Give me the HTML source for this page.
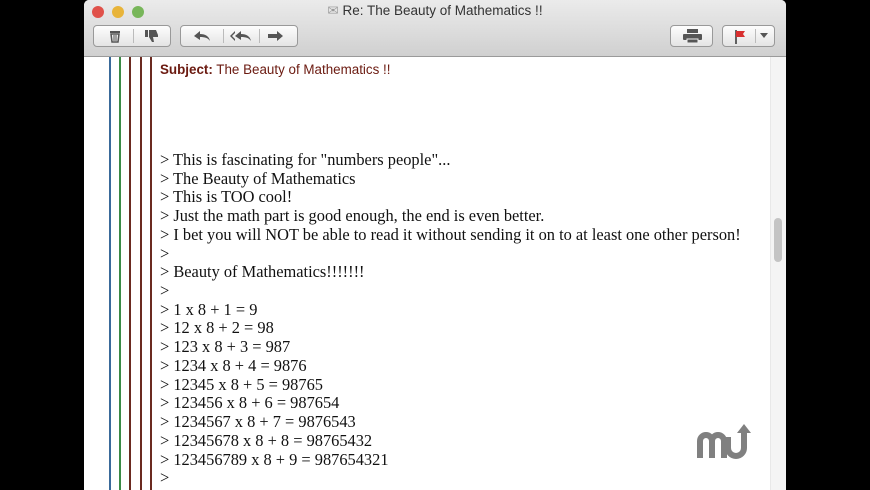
<!DOCTYPE html>
<html><head><style>
body{margin:0;width:870px;height:490px;background:#000;position:relative;overflow:hidden;font-family:"Liberation Sans",sans-serif}
.win{position:absolute;left:84px;top:0;width:702px;height:490px;background:#fff;border-radius:5px 5px 0 0;overflow:hidden}
.tb{position:absolute;left:0;top:0;width:702px;height:56px;background:linear-gradient(#ebebeb,#d0d0d0);border-bottom:1px solid #9a9a9a}
.dot{position:absolute;top:6px;width:12px;height:12px;border-radius:50%}
.title{position:absolute;top:3px;left:0;width:702px;text-align:center;font-size:13.5px;color:#333}
.btn{position:absolute;top:25px;height:22px;border:1px solid #999;border-radius:4px;background:linear-gradient(#fdfdfd,#e4e4e4);box-sizing:border-box}
.sep{position:absolute;top:3px;width:1px;height:14px;background:#bbb}
.ic{position:absolute;top:2px;font-size:14px;color:#555}
.vl{position:absolute;top:57px;bottom:0;width:2px}
.txt{position:absolute;left:76px;top:151px;font-family:"Liberation Serif",serif;font-size:16.4px;line-height:18.72px;color:#111;white-space:pre}
.sb{position:absolute;right:0;top:57px;width:15px;bottom:0;background:#f4f4f4;border-left:1px solid #e8e8e8}
</style></head><body>
<div class="win">
<div class="tb">
<div class="dot" style="left:8px;background:#e0514a"></div>
<div class="dot" style="left:28px;background:#e8b43a"></div>
<div class="dot" style="left:48px;background:#78b65a"></div>
<div class="title"><span style="color:#999">✉</span> Re: The Beauty of Mathematics !!</div>
<div class="btn" style="left:9px;width:78px"><svg class="ic" style="left:15px;top:3px" width="12" height="14"><rect x="1" y="2" width="10" height="2" fill="#555"/><path d="M2 5h8l-1 8H3z" fill="none" stroke="#555" stroke-width="1.5"/><path d="M5 6v6M7 6v6" stroke="#555"/></svg><div class="sep" style="left:39px"></div><svg class="ic" style="left:50px;top:3px" width="16" height="14"><path d="M1 1h3v7H1zM5 1h7l2 5v2H9l1 5H8L5 8z" fill="#555"/></svg></div>
<div class="btn" style="left:96px;width:118px"><svg class="ic" style="left:12px;top:4px" width="18" height="12"><path d="M1 6L7 1v3c5 0 9 2 10 7-2-3-5-4-10-4v3z" fill="#555"/></svg><div class="sep" style="left:42px"></div><svg class="ic" style="left:48px;top:4px" width="24" height="12"><path d="M1 6L6 1v2L3 6l3 3v2zM6 6l6-5v3c5 0 9 2 10 7-2-3-5-4-10-4v3z" fill="#555"/></svg><div class="sep" style="left:78px"></div><svg class="ic" style="left:86px;top:4px" width="18" height="12"><path d="M1 4h9V1l6 5-6 5V8H1z" fill="#555"/></svg></div>
<div class="btn" style="left:586px;width:43px"><svg class="ic" style="left:12px;top:3px" width="19" height="14"><rect x="4" y="0" width="11" height="4" fill="#555"/><rect x="0" y="5" width="19" height="6" rx="1" fill="#555"/><rect x="4" y="10" width="11" height="4" fill="#555" stroke="#eee"/></svg></div>
<div class="btn" style="left:638px;width:53px"><svg class="ic" style="left:10px;top:3px" width="14" height="16"><path d="M3 1v14" stroke="#333" stroke-width="1.5"/><path d="M3 2h9l-2 3 2 3H3z" fill="#d83030"/></svg><div class="sep" style="left:32px"></div><svg class="ic" style="left:37px;top:7px" width="8" height="6"><path d="M0 0h8L4 5z" fill="#555"/></svg></div>
</div>
<div class="vl" style="left:25px;background:#3a6a9a"></div>
<div class="vl" style="left:35px;background:#3b8a45"></div>
<div class="vl" style="left:45px;background:#6b2a20"></div>
<div class="vl" style="left:56px;background:#6b2a20"></div>
<div class="vl" style="left:66px;background:#6b2a20"></div>
<div style="position:absolute;left:76px;top:62px;font-size:13.4px;color:#6b1a10"><b>Subject:</b> The Beauty of Mathematics !!</div>
<div class="txt">&gt; This is fascinating for "numbers people"...
&gt; The Beauty of Mathematics
&gt; This is TOO cool!
&gt; Just the math part is good enough, the end is even better.
&gt; I bet you will NOT be able to read it without sending it on to at least one other person!
&gt;
&gt; Beauty of Mathematics!!!!!!!
&gt;
&gt; 1 x 8 + 1 = 9
&gt; 12 x 8 + 2 = 98
&gt; 123 x 8 + 3 = 987
&gt; 1234 x 8 + 4 = 9876
&gt; 12345 x 8 + 5 = 98765
&gt; 123456 x 8 + 6 = 987654
&gt; 1234567 x 8 + 7 = 9876543
&gt; 12345678 x 8 + 8 = 98765432
&gt; 123456789 x 8 + 9 = 987654321
&gt;</div>
<div class="sb"><div style="position:absolute;left:3px;top:161px;width:8px;height:44px;border-radius:4px;background:#c4c4c4"></div></div>
<svg style="position:absolute;left:613px;top:423px" width="60" height="38"><path d="M3 35V18a6 6 0 0 1 12 0v17M15 18a6 6 0 0 1 12 0v17M31 14v11a8 8 0 0 0 16 0V8" fill="none" stroke="#808080" stroke-width="6"/><path d="M40 10l7-9 7 9z" fill="#808080"/></svg>
</div>
</body></html>
